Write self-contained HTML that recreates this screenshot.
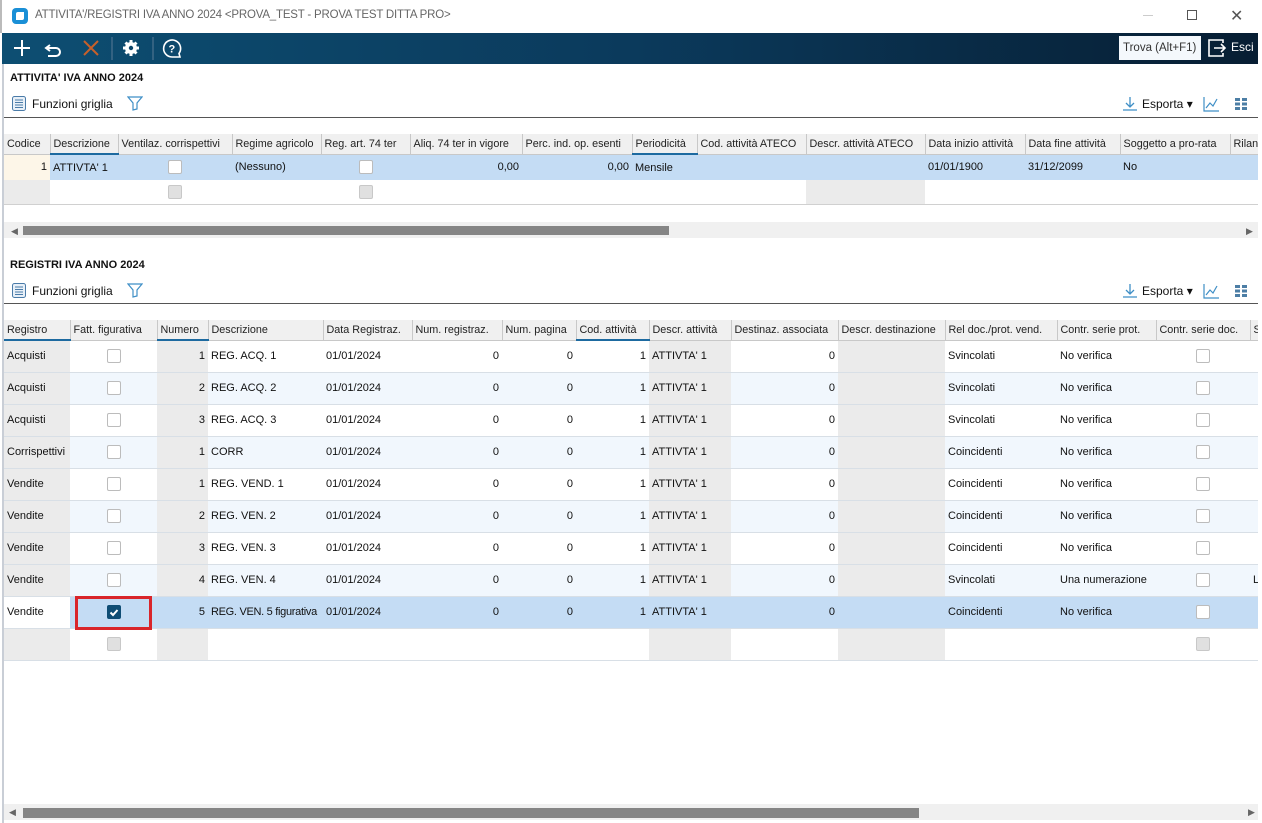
<!DOCTYPE html>
<html><head><meta charset="utf-8"><style>
*{box-sizing:border-box;margin:0;padding:0}
body{width:1262px;height:823px;overflow:hidden;background:#fff;font-family:"Liberation Sans",sans-serif;font-size:11px;color:#111;position:relative}
.abs{position:absolute}
.title{left:0;top:0;width:1262px;height:33px;background:#fff;border-left:2px solid #bbb}
.title .t{left:33px;top:9px;color:#666;font-size:11.5px;letter-spacing:-0.2px}
.tb{left:2px;top:33px;width:1256px;height:31px;background:linear-gradient(90deg,#0d4e72,#0b3a5c 50%,#071e33)}
.frame{left:2px;top:64px;width:1256px;height:759px;border-left:2px solid #c9ced6}
.sec{font-weight:bold;font-size:11px;left:10px}
.fg{left:12px;font-size:12px}
table{border-collapse:collapse;table-layout:fixed;position:absolute}
td,th{white-space:nowrap;overflow:hidden;padding:0 3px;font-weight:normal;text-align:left}
th{background:#f0f0f0;border-right:1px solid #c8c8c8;border-bottom:1px solid #c8c8c8;height:20px;font-size:10.8px;color:#222}
th.s{border-bottom:2px solid #1d6aa0}
.r{text-align:right}.c{text-align:center}
.g{background:#ebebeb}
.cb{display:inline-block;width:14px;height:14px;border:1px solid #bcbcbc;border-radius:2px;background:#fff;vertical-align:middle}
.cbd{background:#e0e0e0;border-color:#c8c8c8}
.t2 td{height:32px;border-bottom:1px solid #d8dfe6}
.alt td{background:#f1f7fd}
.alt td.g{background:#ebebeb}
.sel td{background:#c4dcf4}
.sel td.w{background:#fff}
.sbar{background:#f0f0f0}
.thumb{background:#858585}
</style></head><body>
<div class="abs title">
 <div class="abs" style="left:10px;top:8px;width:16px;height:16px;background:#1a8fd6;border-radius:4px"><div class="abs" style="left:4px;top:4px;width:8px;height:8px;background:#fff;border-radius:2px 0 2px 0"></div></div>
 <div class="abs t">ATTIVITA'/REGISTRI IVA ANNO 2024 &lt;PROVA_TEST - PROVA TEST DITTA PRO&gt;</div>
 <div class="abs" style="left:1141px;top:15px;width:10px;border-top:1px solid #ccc"></div>
 <div class="abs" style="left:1185px;top:10px;width:10px;height:10px;border:1px solid #555"></div>
 <div class="abs" style="left:1228px;top:6px;font-size:16px;color:#555">✕</div>
</div>
<div class="abs tb">
 <svg class="abs" style="left:0;top:0" width="200" height="31"><g stroke="#fff" stroke-width="2" fill="none"><path d="M20 7v16M12 15h16"/><path d="M48 12l-4 3 4 3M44 15h10a4 4 0 0 1 0 8h-8"/></g><path d="M82 8l14 14M96 8l-14 14" stroke="#c8602a" stroke-width="2"/><line x1="110" y1="4" x2="110" y2="27" stroke="#5a7a95"/><circle cx="129" cy="15" r="6" fill="#fff"/><g stroke="#fff" stroke-width="3"><path d="M129 7v16M121 15h16M123.5 9.5l11 11M134.5 9.5l-11 11"/></g><circle cx="129" cy="15" r="2.2" fill="#0c4569"/><line x1="151" y1="4" x2="151" y2="27" stroke="#5a7a95"/><path d="M170 24a8.5 8.5 0 1 1 7-3.5l1 3.5z" stroke="#fff" stroke-width="1.6" fill="none"/><text x="166.5" y="19.5" fill="#fff" font-size="11" font-family="Liberation Sans" font-weight="bold">?</text></svg>
 <div class="abs" style="left:1117px;top:3px;width:82px;height:24px;background:#f4f8fc;color:#333;font-size:11.5px;line-height:24px;padding-left:4px">Trova (Alt+F1)</div>
 <svg class="abs" style="left:1204px;top:4px" width="22" height="22"><path d="M8 11h11M15 7l4 4-4 4" stroke="#fff" stroke-width="1.6" fill="none"/><path d="M17 6V3H3v16h14v-3" stroke="#fff" stroke-width="1.6" fill="none"/></svg>
 <div class="abs" style="left:1229px;top:7px;color:#fff;font-size:12px">Esci</div>
</div>
<div class="abs frame"></div>
<div class="abs sec" style="top:72px">ATTIVITA' IVA ANNO 2024</div>
<svg class="abs" style="left:12px;top:96px" width="14" height="15"><rect x="0.5" y="0.5" width="13" height="14" rx="2" fill="#e8f0f8" stroke="#4a7ba8"/><path d="M3 4h8M3 6.5h8M3 9h8M3 11.5h8" stroke="#4a7ba8"/></svg>
<div class="abs fg" style="left:32px;top:97px">Funzioni griglia</div>
<svg class="abs" style="left:127px;top:96px" width="16" height="15"><path d="M1 1h14l-5 6v6l-4 1V7z" fill="none" stroke="#3f8fc6" stroke-width="1.2"/></svg>
<div class="abs" style="left:4px;top:117px;width:1254px;border-top:1px solid #555"></div>
<svg class="abs" style="left:1122px;top:96px" width="16" height="16"><path d="M8 1v10M4 7l4 4 4-4M1 14h14" stroke="#3f8fc6" stroke-width="1.3" fill="none"/></svg>
<div class="abs" style="left:1142px;top:97px;font-size:12px">Esporta ▾</div>
<svg class="abs" style="left:1203px;top:96px" width="16" height="16"><path d="M1 1v14h15M3 12l4-5 3 3 4-7" stroke="#3f8fc6" stroke-width="1.2" fill="none"/></svg>
<svg class="abs" style="left:1235px;top:98px" width="12" height="12" fill="#4c7ea5"><rect x="0" y="0" width="5" height="3"/><rect x="7" y="0" width="5" height="3"/><rect x="0" y="4.5" width="5" height="3"/><rect x="7" y="4.5" width="5" height="3"/><rect x="0" y="9" width="5" height="3"/><rect x="7" y="9" width="5" height="3"/></svg>

<div class="abs" style="left:4px;top:134px;width:1254px;height:105px;overflow:hidden">
<table style="left:0;top:0;width:1276px">
<colgroup><col style="width:46px"><col style="width:68px"><col style="width:114px"><col style="width:89px"><col style="width:89px"><col style="width:112px"><col style="width:110px"><col style="width:65px"><col style="width:109px"><col style="width:119px"><col style="width:100px"><col style="width:95px"><col style="width:110px"><col style="width:50px"></colgroup>
<tr><th>Codice</th><th class="s">Descrizione</th><th>Ventilaz. corrispettivi</th><th>Regime agricolo</th><th>Reg. art. 74 ter</th><th>Aliq. 74 ter in vigore</th><th>Perc. ind. op. esenti</th><th class="s">Periodicità</th><th>Cod. attività ATECO</th><th>Descr. attività ATECO</th><th>Data inizio attività</th><th>Data fine attività</th><th>Soggetto a pro-rata</th><th>Rilanc</th></tr>
<tr style="height:26px;background:#c4dcf4"><td class="r" style="background:#fdf6e8">1</td><td>ATTIVTA' 1</td><td class="c"><span class="cb"></span></td><td>(Nessuno)</td><td class="c"><span class="cb"></span></td><td class="r">0,00</td><td class="r">0,00</td><td>Mensile</td><td></td><td></td><td>01/01/1900</td><td>31/12/2099</td><td>No</td><td></td></tr>
<tr style="height:24px;border-bottom:1px solid #d0d0d0"><td class="g"></td><td></td><td class="c"><span class="cb cbd"></span></td><td></td><td class="c"><span class="cb cbd"></span></td><td></td><td></td><td></td><td></td><td class="g"></td><td></td><td></td><td></td><td></td></tr>
</table>
<div class="abs sbar" style="left:0;top:88px;width:1254px;height:16px"></div>
<div class="abs thumb" style="left:19px;top:92px;width:646px;height:9px"></div>
<div class="abs" style="left:7px;top:92px;color:#666;font-size:9px">◀</div>
<div class="abs" style="left:1242px;top:92px;color:#666;font-size:9px">▶</div>
</div>

<div class="abs sec" style="top:259px">REGISTRI IVA ANNO 2024</div>
<svg class="abs" style="left:12px;top:283px" width="14" height="15"><rect x="0.5" y="0.5" width="13" height="14" rx="2" fill="#e8f0f8" stroke="#4a7ba8"/><path d="M3 4h8M3 6.5h8M3 9h8M3 11.5h8" stroke="#4a7ba8"/></svg>
<div class="abs fg" style="left:32px;top:284px">Funzioni griglia</div>
<svg class="abs" style="left:127px;top:283px" width="16" height="15"><path d="M1 1h14l-5 6v6l-4 1V7z" fill="none" stroke="#3f8fc6" stroke-width="1.2"/></svg>
<div class="abs" style="left:4px;top:303px;width:1254px;border-top:1px solid #555"></div>
<svg class="abs" style="left:1122px;top:283px" width="16" height="16"><path d="M8 1v10M4 7l4 4 4-4M1 14h14" stroke="#3f8fc6" stroke-width="1.3" fill="none"/></svg>
<div class="abs" style="left:1142px;top:284px;font-size:12px">Esporta ▾</div>
<svg class="abs" style="left:1203px;top:283px" width="16" height="16"><path d="M1 1v14h15M3 12l4-5 3 3 4-7" stroke="#3f8fc6" stroke-width="1.2" fill="none"/></svg>
<svg class="abs" style="left:1235px;top:285px" width="12" height="12" fill="#4c7ea5"><rect x="0" y="0" width="5" height="3"/><rect x="7" y="0" width="5" height="3"/><rect x="0" y="4.5" width="5" height="3"/><rect x="7" y="4.5" width="5" height="3"/><rect x="0" y="9" width="5" height="3"/><rect x="7" y="9" width="5" height="3"/></svg>

<div class="abs" style="left:4px;top:320px;width:1254px;height:500px;overflow:hidden">
<table class="t2" style="left:0;top:0;width:1266px">
<colgroup><col style="width:66px"><col style="width:87px"><col style="width:51px"><col style="width:115px"><col style="width:89px"><col style="width:90px"><col style="width:74px"><col style="width:73px"><col style="width:82px"><col style="width:107px"><col style="width:107px"><col style="width:112px"><col style="width:99px"><col style="width:94px"><col style="width:20px"></colgroup>
<tr><th class="s">Registro</th><th>Fatt. figurativa</th><th class="s">Numero</th><th>Descrizione</th><th>Data Registraz.</th><th>Num. registraz.</th><th>Num. pagina</th><th class="s">Cod. attività</th><th>Descr. attività</th><th>Destinaz. associata</th><th>Descr. destinazione</th><th>Rel doc./prot. vend.</th><th>Contr. serie prot.</th><th>Contr. serie doc.</th><th>S</th></tr>
<tr><td class="g">Acquisti</td><td class="c"><span class="cb"></span></td><td class="r g">1</td><td>REG. ACQ. 1</td><td>01/01/2024</td><td class="r">0</td><td class="r">0</td><td class="r">1</td><td class="g">ATTIVTA' 1</td><td class="r">0</td><td class="g"></td><td>Svincolati</td><td>No verifica</td><td class="c"><span class="cb"></span></td><td></td></tr>
<tr class="alt"><td class="g">Acquisti</td><td class="c"><span class="cb"></span></td><td class="r g">2</td><td>REG. ACQ. 2</td><td>01/01/2024</td><td class="r">0</td><td class="r">0</td><td class="r">1</td><td class="g">ATTIVTA' 1</td><td class="r">0</td><td class="g"></td><td>Svincolati</td><td>No verifica</td><td class="c"><span class="cb"></span></td><td></td></tr>
<tr><td class="g">Acquisti</td><td class="c"><span class="cb"></span></td><td class="r g">3</td><td>REG. ACQ. 3</td><td>01/01/2024</td><td class="r">0</td><td class="r">0</td><td class="r">1</td><td class="g">ATTIVTA' 1</td><td class="r">0</td><td class="g"></td><td>Svincolati</td><td>No verifica</td><td class="c"><span class="cb"></span></td><td></td></tr>
<tr class="alt"><td class="g">Corrispettivi</td><td class="c"><span class="cb"></span></td><td class="r g">1</td><td>CORR</td><td>01/01/2024</td><td class="r">0</td><td class="r">0</td><td class="r">1</td><td class="g">ATTIVTA' 1</td><td class="r">0</td><td class="g"></td><td>Coincidenti</td><td>No verifica</td><td class="c"><span class="cb"></span></td><td></td></tr>
<tr><td class="g">Vendite</td><td class="c"><span class="cb"></span></td><td class="r g">1</td><td>REG. VEND. 1</td><td>01/01/2024</td><td class="r">0</td><td class="r">0</td><td class="r">1</td><td class="g">ATTIVTA' 1</td><td class="r">0</td><td class="g"></td><td>Coincidenti</td><td>No verifica</td><td class="c"><span class="cb"></span></td><td></td></tr>
<tr class="alt"><td class="g">Vendite</td><td class="c"><span class="cb"></span></td><td class="r g">2</td><td>REG. VEN. 2</td><td>01/01/2024</td><td class="r">0</td><td class="r">0</td><td class="r">1</td><td class="g">ATTIVTA' 1</td><td class="r">0</td><td class="g"></td><td>Coincidenti</td><td>No verifica</td><td class="c"><span class="cb"></span></td><td></td></tr>
<tr><td class="g">Vendite</td><td class="c"><span class="cb"></span></td><td class="r g">3</td><td>REG. VEN. 3</td><td>01/01/2024</td><td class="r">0</td><td class="r">0</td><td class="r">1</td><td class="g">ATTIVTA' 1</td><td class="r">0</td><td class="g"></td><td>Coincidenti</td><td>No verifica</td><td class="c"><span class="cb"></span></td><td></td></tr>
<tr class="alt"><td class="g">Vendite</td><td class="c"><span class="cb"></span></td><td class="r g">4</td><td>REG. VEN. 4</td><td>01/01/2024</td><td class="r">0</td><td class="r">0</td><td class="r">1</td><td class="g">ATTIVTA' 1</td><td class="r">0</td><td class="g"></td><td>Svincolati</td><td>Una numerazione</td><td class="c"><span class="cb"></span></td><td>L</td></tr>
<tr class="sel"><td class="w">Vendite</td><td class="c"><span class="cb" style="background:#0f4d74;border-color:#0f4d74;position:relative"><svg width="12" height="12" style="position:absolute;left:0;top:0"><path d="M2.5 6.5l2.5 2.5 4.5-5" stroke="#fff" stroke-width="2" fill="none"/></svg></span></td><td class="r">5</td><td style="letter-spacing:-0.3px">REG. VEN. 5 figurativa</td><td>01/01/2024</td><td class="r">0</td><td class="r">0</td><td class="r">1</td><td>ATTIVTA' 1</td><td class="r">0</td><td></td><td>Coincidenti</td><td>No verifica</td><td class="c"><span class="cb"></span></td><td></td></tr>
<tr><td class="g"></td><td class="c"><span class="cb cbd"></span></td><td class="g"></td><td></td><td></td><td></td><td></td><td></td><td class="g"></td><td></td><td class="g"></td><td></td><td></td><td class="c"><span class="cb cbd"></span></td><td></td></tr>
</table>
<div class="abs" style="left:71px;top:276px;width:77px;height:34px;border:3px solid #d9252a"></div>
<div class="abs sbar" style="left:0;top:484px;width:1254px;height:16px"></div>
<div class="abs thumb" style="left:19px;top:488px;width:896px;height:10px"></div>
<div class="abs" style="left:5px;top:487px;color:#666;font-size:9px">◀</div>
<div class="abs" style="left:1244px;top:487px;color:#666;font-size:9px">▶</div>
</div>
</body></html>
